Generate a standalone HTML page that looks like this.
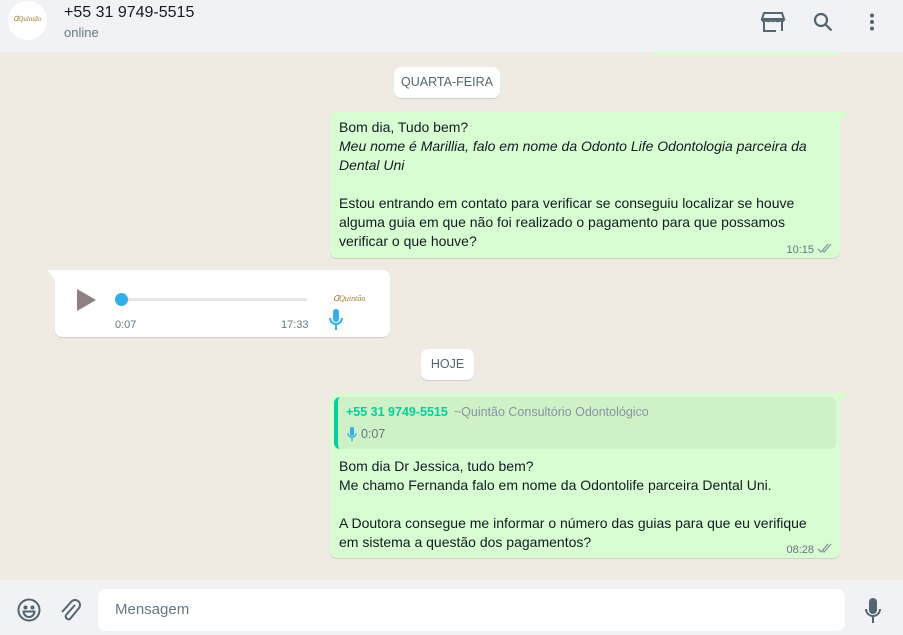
<!DOCTYPE html>
<html><head><meta charset="utf-8"><style>
*{margin:0;padding:0;box-sizing:border-box}
body{width:903px;height:635px;overflow:hidden;font-family:"Liberation Sans",sans-serif;background:#efeae2;position:relative;color:#111b21}
.hdr{position:absolute;left:0;top:0;width:903px;height:52px;background:#f0f2f5}
.ftr{position:absolute;left:0;top:580px;width:903px;height:55px;background:#f0f2f5}
.abs{position:absolute}
.bub{position:absolute;background:#d9fdd3;border-radius:7px;box-shadow:0 1px 0.5px rgba(11,20,26,.13);font-size:14px;line-height:19px}
.chip{position:absolute;background:#fff;border-radius:7px;font-size:12.5px;color:#54656f;text-align:center;line-height:31px;box-shadow:0 1px 0.5px rgba(11,20,26,.13)}
.time{position:absolute;font-size:11px;color:#667781}
</style></head><body>
<div class="hdr">
 <div class="abs" style="left:8px;top:1px;width:39px;height:39px;border-radius:50%;background:#fff"></div>
 <div class="abs" style="left:13px;top:15px;font-size:7px;color:#a07a30;font-family:'Liberation Serif',serif;font-style:italic">ᗡQuintão</div>
 <div class="abs" style="left:64px;top:4px;font-size:16px;color:#111b21">+55 31 9749-5515</div>
 <div class="abs" style="left:64px;top:25px;font-size:13px;color:#667781">online</div>
 <svg class="abs" style="left:760px;top:11px" width="26" height="22" viewBox="0 0 26 22" fill="none" stroke="#54656f" stroke-width="2"><path d="M4 2h18l2 6H2z"/><path d="M4 10v10h12M22 10v10"/><path d="M2 8c0 3 4 3 4 0c0 3 5 3 5 0c0 3 4 3 4 0c0 3 5 3 5 0c0 3 4 3 4 0"/></svg>
 <svg class="abs" style="left:813px;top:12px" width="20" height="20" viewBox="0 0 20 20" fill="none" stroke="#54656f" stroke-width="2.2"><circle cx="8" cy="8" r="6"/><path d="M12.5 12.5l6 6"/></svg>
 <svg class="abs" style="left:869px;top:13px" width="6" height="18"><circle cx="3" cy="2.5" r="2" fill="#54656f"/><circle cx="3" cy="9" r="2" fill="#54656f"/><circle cx="3" cy="15.5" r="2" fill="#54656f"/></svg>
</div>
<div class="abs" style="left:650px;top:52px;width:190px;height:3px;background:#d9fdd3;border-radius:0 0 4px 4px"></div>

<div class="chip" style="left:394px;top:67px;width:106px;height:31px">QUARTA-FEIRA</div>

<div class="bub" style="left:330px;top:112px;width:510px;height:146px;border-top-right-radius:0;padding:6px 9px">
 <div>Bom dia, Tudo bem?</div>
 <div style="font-style:italic">Meu nome é Marillia, falo em nome da Odonto Life Odontologia parceira da<br>Dental Uni</div>
 <div>&nbsp;</div>
 <div>Estou entrando em contato para verificar se conseguiu localizar se houve<br>alguma guia em que não foi realizado o pagamento para que possamos<br>verificar o que houve?</div>
 <div class="time" style="right:26px;top:129px">10:15</div>
 <svg class="abs" style="right:7px;top:131px" width="16" height="10" viewBox="0 0 16 10" fill="none" stroke="#8696a0" stroke-width="1.3"><path d="M1 6l3 3l7-8M6 8l1 1l7-8"/></svg>
</div>
<svg class="abs" style="left:840px;top:112px" width="8" height="13"><path d="M0 0h8L0 10z" fill="#d9fdd3"/></svg>

<div class="bub" style="left:55px;top:270px;width:335px;height:67px;background:#fff;border-top-left-radius:0"></div>
<svg class="abs" style="left:47px;top:270px" width="8" height="13"><path d="M8 0H0l8 10z" fill="#fff"/></svg>
<svg class="abs" style="left:77px;top:289px" width="20" height="22"><path d="M0 0L19 11L0 22z" fill="#8f8181"/></svg>
<div class="abs" style="left:121px;top:298px;width:186px;height:3px;background:#e6e6e6"></div>
<div class="abs" style="left:115px;top:293px;width:13px;height:13px;border-radius:50%;background:#34aee8"></div>
<div class="time" style="left:115px;top:319px">0:07</div>
<div class="time" style="left:281px;top:319px">17:33</div>
<div class="abs" style="left:333px;top:294px;font-size:8px;color:#a07a30;font-family:'Liberation Serif',serif;font-style:italic">ᗡQuintão</div>
<svg class="abs" style="left:329px;top:309px" width="14" height="22" viewBox="0 0 14 22"><rect x="4" y="0" width="6" height="13" rx="3" fill="#34aee8"/><path d="M1 9a6 6 0 0 0 12 0M7 15v6" stroke="#34aee8" stroke-width="2" fill="none"/></svg>

<div class="chip" style="left:421px;top:349px;width:53px;height:31px">HOJE</div>

<div class="bub" style="left:330px;top:393px;width:510px;height:165px;border-top-right-radius:0;padding:4px">
 <div style="background:#cff1c8;border-radius:6px;height:52px;border-left:4px solid #06cf9c;padding:6px 8px;position:relative">
  <div style="font-size:12.5px;color:#8696a0"><b style="color:#06cf9c;font-weight:bold;margin-right:6px">+55 31 9749-5515</b>~Quintão Consultório Odontológico</div>
  <div style="font-size:12.5px;color:#667781;margin-top:3px;display:flex;align-items:center"><svg width="12" height="15" viewBox="0 0 14 22" style="margin-right:3px"><rect x="4" y="0" width="6" height="13" rx="3" fill="#34aee8"/><path d="M1 9a6 6 0 0 0 12 0M7 15v6" stroke="#34aee8" stroke-width="2" fill="none"/></svg>0:07</div>
 </div>
 <div style="padding:8px 5px 0">
  <div>Bom dia Dr Jessica, tudo bem?<br>Me chamo Fernanda falo em nome da Odontolife parceira Dental Uni.<br>&nbsp;<br>A Doutora consegue me informar o número das guias para que eu verifique<br>em sistema a questão dos pagamentos?</div>
 </div>
 <div class="time" style="right:26px;top:148px">08:28</div>
 <svg class="abs" style="right:7px;top:150px" width="16" height="10" viewBox="0 0 16 10" fill="none" stroke="#8696a0" stroke-width="1.3"><path d="M1 6l3 3l7-8M6 8l1 1l7-8"/></svg>
</div>
<svg class="abs" style="left:840px;top:393px" width="8" height="13"><path d="M0 0h8L0 10z" fill="#d9fdd3"/></svg>

<div class="ftr">
 <svg class="abs" style="left:17px;top:18px" width="24" height="24" viewBox="0 0 24 24" fill="none" stroke="#54656f" stroke-width="2"><circle cx="12" cy="12" r="10.5"/><circle cx="8.5" cy="9.5" r="1" fill="#54656f"/><circle cx="15.5" cy="9.5" r="1" fill="#54656f"/><path d="M6.5 13.5h11a5.5 5.5 0 0 1-11 0z"/></svg>
 <svg class="abs" style="left:59px;top:18px" width="22" height="24" viewBox="0 0 22 24" fill="none" stroke="#54656f" stroke-width="2"><path d="M16 7L7 17a3 3 0 0 0 4 4l9-11a5 5 0 0 0-7-7L3 14"/></svg>
 <div class="abs" style="left:98px;top:9px;width:747px;height:42px;background:#fff;border-radius:8px;font-size:15px;color:#667781;padding:12px 17px">Mensagem</div>
 <svg class="abs" style="left:864px;top:18px" width="18" height="26" viewBox="0 0 18 26"><rect x="5" y="0" width="8" height="16" rx="4" fill="#54656f"/><path d="M2 11a7 7 0 0 0 14 0M9 18v7" stroke="#54656f" stroke-width="2" fill="none"/></svg>
</div>
</body></html>
